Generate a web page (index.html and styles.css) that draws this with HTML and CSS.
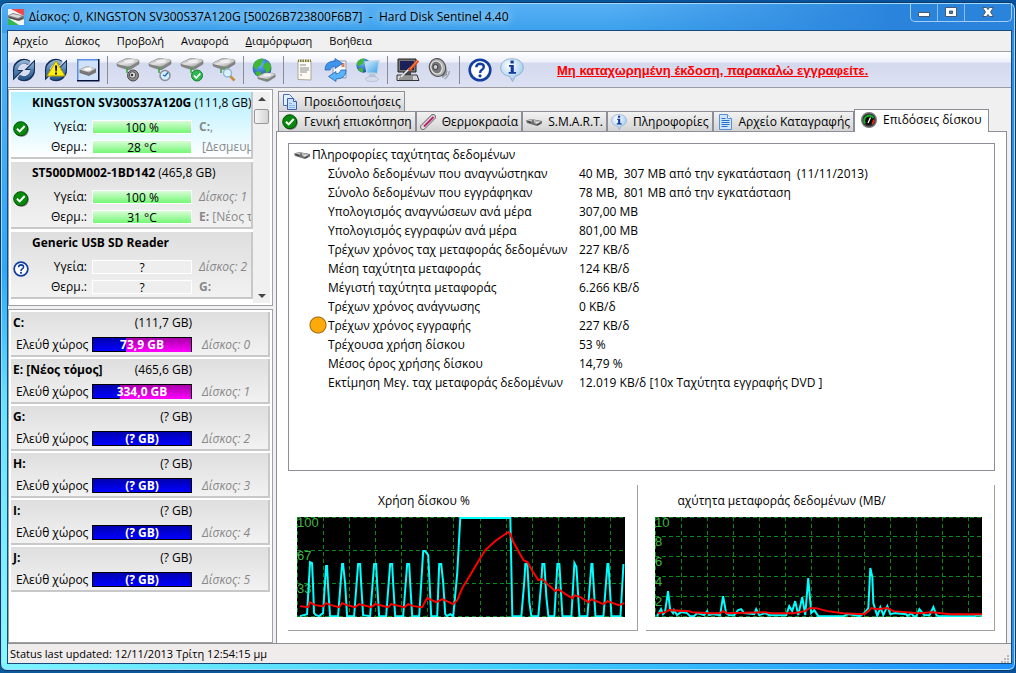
FILE: index.html
```html
<!DOCTYPE html>
<html lang="el">
<head>
    <meta charset="UTF-8">
    <meta name="viewport" content="width=device-width, initial-scale=1.0">
    <title>Hard Disk Sentinel 4.40</title>
    <link rel="stylesheet" href="styles.css">
</head>
<body>
    <!-- shared icons -->
    <svg class="defs" aria-hidden="true">
        <defs>
            <linearGradient id="metal" x1="0" y1="0" x2="1" y2="1">
                <stop offset="0" stop-color="#8a8a8a"/>
                <stop offset=".45" stop-color="#e4e4e4"/>
                <stop offset="1" stop-color="#9c9c9c"/>
            </linearGradient>
            <linearGradient id="steel" gradientUnits="userSpaceOnUse" x1="0" y1="0" x2="0" y2="24">
                <stop offset="0" stop-color="#a9c6e0"/>
                <stop offset=".5" stop-color="#5480b0"/>
                <stop offset="1" stop-color="#1d4a80"/>
            </linearGradient>
            <linearGradient id="screen" x1="0" y1="0" x2="1" y2="1">
                <stop offset="0" stop-color="#d4f2ff"/>
                <stop offset="1" stop-color="#3a9ae6"/>
            </linearGradient>
            <radialGradient id="sea" cx=".4" cy=".3" r=".8">
                <stop offset="0" stop-color="#6cb8ff"/>
                <stop offset="1" stop-color="#0b3f9c"/>
            </radialGradient>
            <radialGradient id="bubble" cx=".4" cy=".3" r=".8">
                <stop offset="0" stop-color="#ffffff"/>
                <stop offset="1" stop-color="#8fc0ea"/>
            </radialGradient>
        </defs>

        <symbol id="i-refresh" viewBox="0 0 24 24">
            <g fill="none" stroke="#12305a" stroke-width="5">
                <path d="M4 15A8.500 8.500 0 0 1 17 5"/>
                <path d="M20 9A8.500 8.500 0 0 1 7 19"/>
            </g>
            <g fill="#12305a">
                <path d="M23 1.500V12H12.500z"/>
                <path d="M1 22.500V12H11.500z"/>
            </g>
            <g fill="none" stroke="url(#steel)" stroke-width="3.400">
                <path d="M4.300 14.500A8.500 8.500 0 0 1 17.500 5.500"/>
                <path d="M19.700 9.500A8.500 8.500 0 0 1 6.500 18.500"/>
            </g>
            <g fill="url(#steel)">
                <path d="M22 4v7h-7z"/>
                <path d="M2 20v-7h7z"/>
            </g>
        </symbol>
        <symbol id="i-warn" viewBox="0 0 24 24">
            <use href="#i-refresh"/>
            <path d="M12 3 21 18H3z" fill="#ffee10" stroke="#b89c00" stroke-linejoin="round"/>
            <path d="M11 7.500h2.200l-.4 6h-1.400zM11 14.500h2v2h-2z" fill="#111"/>
        </symbol>
        <symbol id="i-disk" viewBox="0 0 24 12">
            <path d="M1 5 9 1q2-.6 4-.4l9 1.200q1.500.6 1 2V6l-8 5q-2 1-4 .4L2 8.500Q1 8 1 7z" fill="#858585" stroke="#6a6a6a" stroke-width=".5"/>
            <path d="M1 5 9 1q2-.6 4-.4l9 1.200q1.200.8.2 1.700L15 7.800q-2 1-4 .4L2 6.200Q.6 5.700 1 5z" fill="url(#metal)"/>
            <ellipse cx="13" cy="3.500" rx="5" ry="1.800" fill="#f6f6f6" opacity=".7"/>
            <path d="M11 9h2v1.500h-2z" fill="#2bb830"/>
        </symbol>
        <symbol id="i-disk-small" viewBox="0 0 16 16">
            <path d="M0 6.500 5 5l11 2v2.500L11 12 1 9z" fill="#6c6c6c"/>
            <path d="M1 6.500 5 5.300l7 1.500-4 1.500z" fill="#c4c4c4"/>
            <path d="M8 9l3-1.800 4 .4-4 2.200z" fill="#e4e4e4"/>
            <path d="M2 7.500l3 1M6 7h2M11 11l3-1.500" stroke="#333"/>
        </symbol>
        <symbol id="i-disk-box" viewBox="0 0 24 24">
            <path d="M1 1h22v22H1z" fill="#cfe2fa"/>
            <path d="M1 1h21v1.500H2.500V22H1z" fill="#5a8ee0"/>
            <path d="M22 1h1.500v22.500H1V22h21z" fill="#06143c"/>
            <path d="M3.500 11.500 11 8l9 2.500v4L13 18l-9.500-3z" fill="#777"/>
            <path d="M3.500 11.500 11 8l9 2.500-7 4z" fill="url(#metal)"/>
            <ellipse cx="12" cy="11.200" rx="3.500" ry="1.300" fill="#fff"/>
        </symbol>
        <symbol id="i-disk-sound" viewBox="0 0 24 24">
            <use href="#i-disk" width="24" height="12"/>
            <path d="M11 11v4" stroke="#3aa03a" stroke-width="1.500"/>
            <circle cx="17" cy="17.500" r="5.500" fill="#8c8c8c" stroke="#4a4a4a"/>
            <circle cx="16.500" cy="17" r="3.200" fill="#ddd" stroke="#555"/>
            <circle cx="16" cy="17" r="1.300" fill="#333"/>
        </symbol>
        <symbol id="i-disk-clock" viewBox="0 0 24 24">
            <use href="#i-disk" width="24" height="12"/>
            <path d="M11 11v4" stroke="#3aa03a" stroke-width="1.500"/>
            <circle cx="17" cy="17.500" r="5" fill="#d4ecff" stroke="#8a8f96" stroke-width="1.500"/>
            <path d="M20 14.500l-3 3.500-2-1" fill="none" stroke="#1668b8" stroke-width="1.300"/>
        </symbol>
        <symbol id="i-disk-ok" viewBox="0 0 24 24">
            <use href="#i-disk" width="24" height="12"/>
            <path d="M11 11v4" stroke="#3aa03a" stroke-width="1.500"/>
            <circle cx="17" cy="17.500" r="5.500" fill="#2fb84e" stroke="#16803a"/>
            <path d="M14 17.500l2.300 2.500 4-4.500" fill="none" stroke="#fff" stroke-width="1.800"/>
        </symbol>
        <symbol id="i-disk-find" viewBox="0 0 24 24">
            <use href="#i-disk" width="24" height="12"/>
            <path d="M9 11v4" stroke="#3aa03a" stroke-width="1.500"/>
            <path d="M18 18l4.500 4.500" stroke="#c98c38" stroke-width="2.500"/>
            <circle cx="15.500" cy="15" r="4" fill="#d8f0ff" stroke="#8fb4d0" stroke-width="1.400"/>
        </symbol>
        <symbol id="i-globe" viewBox="0 0 20 20">
            <circle cx="10" cy="10" r="9.500" fill="url(#sea)"/>
            <path d="M3 4q4-4 8-3.300 1 2-1 3l-1 3.500-3 1.800-1.500 3L1 8Q1.500 5.500 3 4zM12 6l4-2.500q3 3 3.200 6.500l-2 4-3.200 1-1-4-2-2zM6 13l3 1 1 3.500L7.500 19Q4 17.500 3 14.500z" fill="#42b830"/>
        </symbol>
        <symbol id="i-globe-disk" viewBox="0 0 24 24">
            <use href="#i-globe" width="20" height="20"/>
            <use href="#i-disk" x="5" y="14" width="19" height="10"/>
        </symbol>
        <symbol id="i-note" viewBox="0 0 24 24">
            <path d="M6 3h13v19l-13-.5z" fill="#fbfbf4" stroke="#a8a898"/>
            <path d="M6 1.500h13v2.500H6z" fill="#77764a"/>
            <path d="M7.500 1v3M10 1v3M12.500 1v3M15 1v3M17.500 1v3" stroke="#eee7b0"/>
            <path d="M8 7h6M8 10h9M8 12h9M8 14h7M8 17h2" stroke="#8a8a8a"/>
        </symbol>
        <symbol id="i-send" viewBox="0 0 24 24">
            <path d="M9 3h13v17l-13-1z" fill="#f2f6fb" stroke="#8a9ab0"/>
            <path d="M17.500 5h3v4h-3z" fill="#e08060"/>
            <path d="M1 12Q1 3 11 3V.500L18.500 5.500 11 10.500V8Q7 8 6 12z" fill="#3f95ee" stroke="#1558b0" stroke-width=".7"/>
            <path d="M22 12q0 9-10 9v2.500L4.500 18.500 12 13.500V16q4 0 5-4z" fill="#58b4fb" stroke="#1558b0" stroke-width=".7"/>
        </symbol>
        <symbol id="i-network" viewBox="0 0 24 24">
            <use href="#i-globe" width="15" height="15"/>
            <path d="M9 4l14-1.500-1.500 13L11 15z" fill="url(#screen)" stroke="#c4d6e6" stroke-width="1.300"/>
            <path d="M13 16h6l1 3H13z" fill="#b9c2d8"/>
            <ellipse cx="16" cy="21" rx="6.500" ry="2.500" fill="#d5dcec" stroke="#a8b2cc" stroke-width=".6"/>
        </symbol>
        <symbol id="i-config" viewBox="0 0 24 24">
            <path d="M2 1h18v13H2z" fill="#777" stroke="#222"/>
            <path d="M4 3h14v9H4z" fill="#1c2258"/>
            <path d="M7 14h8v3H7z" fill="#444"/>
            <path d="M1 17h20l2 5.500H1z" fill="#d4d4d4" stroke="#333"/>
            <path d="M4 19h13M3 21h14" stroke="#555"/>
            <path d="M5 19 14 10" stroke="#eee" stroke-width="1.600"/>
            <path d="M13 12.500 22 2.500" stroke="#d8481c" stroke-width="3.200"/>
            <path d="M14 11 22 2" stroke="#ff9a60" stroke-width="1"/>
        </symbol>
        <symbol id="i-speaker" viewBox="0 0 24 24">
            <path d="M14 3q5 3 5 14l-5 2z" fill="#8d8d8d"/>
            <ellipse cx="9.500" cy="9.500" rx="8" ry="9" transform="rotate(-20 9.500 9.500)" fill="#b4b4b4" stroke="#555" stroke-width="1.200"/>
            <ellipse cx="8.500" cy="9.500" rx="5.500" ry="6.500" transform="rotate(-20 8.500 9.500)" fill="#777" stroke="#eee"/>
            <circle cx="7.500" cy="9" r="2.500" fill="#ccc" stroke="#333"/>
            <path d="M14 19.500q4-2 5-7M16.500 21q4-2.500 5-8" fill="none" stroke="#9aa0aa" stroke-width="1.300"/>
        </symbol>
        <symbol id="i-question" viewBox="0 0 24 24">
            <circle cx="12" cy="12" r="10.300" fill="#fff" stroke="#123f9f" stroke-width="2.600"/>
            <path d="M8.300 9.300q.2-3.500 3.900-3.500 3.700.2 3.600 3.200-.1 1.700-2 2.900-1.700 1-1.700 3" fill="none" stroke="#123f9f" stroke-width="2.400"/>
            <circle cx="12" cy="17.800" r="1.600" fill="#123f9f"/>
        </symbol>
        <symbol id="i-info" viewBox="0 0 24 24">
            <path d="M12 .7c7 0 11.300 4 11.300 8.800 0 4.500-3.300 7.400-7.800 8.500L12.500 23.500 9.500 18.200C4 17.500.7 14 .7 9.500.7 4.700 5 .7 12 .7z" fill="url(#bubble)" stroke="#88aacb" stroke-width=".9"/>
            <path d="M10.500 2.500h3.200v3h-3.200zM9 7h4.800v7H16v1.800H8.700V14h2V8.800H9z" fill="#12399b"/>
        </symbol>
        <symbol id="i-ok" viewBox="0 0 16 16">
            <circle cx="8.600" cy="8.600" r="7.200" fill="#777"/>
            <circle cx="7.700" cy="7.700" r="7" fill="#078a0c" stroke="#034d06"/>
            <path d="M4 7.700l2.700 2.700 5-5.400" fill="none" stroke="#fff" stroke-width="2"/>
        </symbol>
        <symbol id="i-copy" viewBox="0 0 16 16">
            <path d="M1.500.5h6l3 3v8h-9z" fill="#e4f0ff" stroke="#4a6fb0"/>
            <path d="M5.500 4.500h6l3 3v8h-9z" fill="#c9e0fb" stroke="#3a5fa4"/>
            <path d="M11.500 4.500v3h3" fill="#fff" stroke="#3a5fa4"/>
            <path d="M7 9.500h3M7 11.500h6M7 13.500h6" stroke="#8db4e4"/>
        </symbol>
        <symbol id="i-thermo" viewBox="0 0 16 16">
            <path d="M3 13 13 3" stroke="#777" stroke-width="6" stroke-linecap="round"/>
            <path d="M3 13 13 3" stroke="#ddd" stroke-width="4" stroke-linecap="round"/>
            <path d="M4 12.500 13.500 3" stroke="#c0206c" stroke-width="2"/>
            <path d="M2 11 10.500 2.500" stroke="#8f8f8f"/>
        </symbol>
        <symbol id="i-page" viewBox="0 0 16 16">
            <path d="M2.500.5h8l4 4v11h-12z" fill="#cfe6ff" stroke="#5b8fd0"/>
            <path d="M10.500.5v4h4" fill="#fff" stroke="#5b8fd0"/>
            <path d="M4.500 4.500h4M4.500 6.500h8M4.500 8.500h8M4.500 10.500h8M4.500 12.500h6" stroke="#2570c8"/>
        </symbol>
        <symbol id="i-gauge" viewBox="0 0 16 16">
            <circle cx="8" cy="8" r="7.300" fill="#333" stroke="#777" stroke-width="1.400"/>
            <circle cx="8" cy="8" r="5" fill="#050505"/>
            <path d="M4 11.500A5 5 0 1 1 12.500 6" fill="none" stroke="#12b020" stroke-width="2"/>
            <path d="M12.700 7.500A5 5 0 0 1 11 12" fill="none" stroke="#e83010" stroke-width="2"/>
            <path d="M7 11 9.500 5.500" stroke="#fff" stroke-width="1.300"/>
        </symbol>
        <symbol id="i-app" viewBox="0 0 16 16">
            <path d="M0 0h16v16H0z" fill="#f4f4f4"/>
            <path d="M3 0h13v7z" fill="#ee4a4a"/>
            <path d="M0 9l11 7H0z" fill="#30b850"/>
            <path d="M0 6.500 5 4l11 3v3l-5 2-11-3z" fill="#777"/>
            <path d="M1 6.500 5 5l9 2-4 2z" fill="#ddd"/>
            <path d="M1 8.500l9 2.500 5-2" fill="none" stroke="#444"/>
        </symbol>
    </svg>

    <div class="window">
        <header class="titlebar">
            <svg class="icon-16"><use href="#i-app"/></svg>
            <h1>Δίσκος: 0, KINGSTON SV300S37A120G [50026B723800F6B7] &nbsp;-&nbsp; Hard Disk Sentinel 4.40</h1>
            <div class="window-buttons">
                <button type="button" aria-label="Ελαχιστοποίηση"><svg viewBox="0 0 14 12"><path d="M1.500 6.500h11v4h-11z" fill="#fff" stroke="#475872"/></svg></button>
                <button type="button" aria-label="Μεγιστοποίηση"><svg viewBox="0 0 14 12"><path d="M1.500 1.500h11v9h-11zM5.500 5v2.500h3V5z" fill="#fff" fill-rule="evenodd" stroke="#475872"/></svg></button>
                <button type="button" class="close" aria-label="Κλείσιμο"><svg viewBox="0 0 14 12"><path d="M1.500 1.500h4L7 3.500l1.500-2h4L9.500 6l3 4.500h-4L7 8.500l-1.500 2h-4l3-4.500z" fill="#fff" stroke="#475872"/></svg></button>
            </div>
        </header>

        <div class="client">
            <nav class="menu">
                <button type="button">Αρχείο</button>
                <button type="button">Δίσκος</button>
                <button type="button">Προβολή</button>
                <button type="button">Αναφορά</button>
                <button type="button"><u>Δ</u>ιαμόρφωση</button>
                <button type="button">Βοήθεια</button>
            </nav>

            <div class="toolbar">
                <button type="button" aria-label="Ανανέωση"><svg><use href="#i-refresh"/></svg></button>
                <button type="button" aria-label="Προειδοποίηση"><svg><use href="#i-warn"/></svg></button>
                <button type="button" aria-label="Δίσκος"><svg><use href="#i-disk-box"/></svg></button>
                <span class="separator"></span>
                <button type="button" aria-label="Ήχος δίσκου"><svg><use href="#i-disk-sound"/></svg></button>
                <button type="button" aria-label="Σύντομος έλεγχος"><svg><use href="#i-disk-clock"/></svg></button>
                <button type="button" aria-label="Πλήρης έλεγχος"><svg><use href="#i-disk-ok"/></svg></button>
                <button type="button" aria-label="Έλεγχος επιφάνειας"><svg><use href="#i-disk-find"/></svg></button>
                <span class="separator"></span>
                <button type="button" aria-label="Διαδίκτυο"><svg><use href="#i-globe-disk"/></svg></button>
                <span class="separator"></span>
                <button type="button" aria-label="Αναφορά"><svg><use href="#i-note"/></svg></button>
                <button type="button" aria-label="Αποστολή"><svg><use href="#i-send"/></svg></button>
                <button type="button" aria-label="Δίκτυο"><svg><use href="#i-network"/></svg></button>
                <span class="separator"></span>
                <button type="button" aria-label="Διαμόρφωση"><svg><use href="#i-config"/></svg></button>
                <button type="button" aria-label="Ήχος"><svg><use href="#i-speaker"/></svg></button>
                <span class="separator"></span>
                <button type="button" aria-label="Βοήθεια"><svg><use href="#i-question"/></svg></button>
                <button type="button" aria-label="Πληροφορίες"><svg><use href="#i-info"/></svg></button>
                <a class="register" href="#">Μη καταχωρημένη έκδοση, παρακαλώ εγγραφείτε.</a>
            </div>

            <div class="content">
                <aside class="sidebar">
                    <div class="disks">
                        <div class="disk-list">
                            <section class="disk selected">
                                <h2>KINGSTON SV300S37A120G <span>(111,8 GB)</span></h2>
                                <svg class="icon-16 state"><use href="#i-ok"/></svg>
                                <span class="label">Υγεία:</span><span class="bar good">100 %</span><span class="note"><b>C:</b>,</span>
                                <span class="label">Θερμ.:</span><span class="bar good">28 °C</span><span class="note">&nbsp;[Δεσμευμένο]</span>
                            </section>
                            <section class="disk">
                                <h2>ST500DM002-1BD142 <span>(465,8 GB)</span></h2>
                                <svg class="icon-16 state"><use href="#i-ok"/></svg>
                                <span class="label">Υγεία:</span><span class="bar good">100 %</span><span class="note"><i>Δίσκος: 1</i></span>
                                <span class="label">Θερμ.:</span><span class="bar good">31 °C</span><span class="note"><b>E:</b> [Νέος τόμος]</span>
                            </section>
                            <section class="disk">
                                <h2>Generic USB SD Reader</h2>
                                <svg class="icon-16 state"><use href="#i-question"/></svg>
                                <span class="label">Υγεία:</span><span class="bar">?</span><span class="note"><i>Δίσκος: 2</i></span>
                                <span class="label">Θερμ.:</span><span class="bar">?</span><span class="note"><b>G:</b></span>
                            </section>
                        </div>
                        <div class="scrollbar">
                            <span class="arrow up"></span>
                            <span class="thumb"></span>
                            <span class="arrow down"></span>
                        </div>
                    </div>

                    <div class="volumes">
                        <section class="volume">
                            <h2>C:</h2><span class="size">(111,7 GB)</span>
                            <span class="label">Ελεύθ χώρος</span><span class="space"><span class="used" style="width: 66%"></span><b>73,9 GB</b></span><i>Δίσκος: 0</i>
                        </section>
                        <section class="volume">
                            <h2>E: [Νέος τόμος]</h2><span class="size">(465,6 GB)</span>
                            <span class="label">Ελεύθ χώρος</span><span class="space"><span class="used" style="width: 72%"></span><b>334,0 GB</b></span><i>Δίσκος: 1</i>
                        </section>
                        <section class="volume">
                            <h2>G:</h2><span class="size">(? GB)</span>
                            <span class="label">Ελεύθ χώρος</span><span class="space"><b>(? GB)</b></span><i>Δίσκος: 2</i>
                        </section>
                        <section class="volume">
                            <h2>H:</h2><span class="size">(? GB)</span>
                            <span class="label">Ελεύθ χώρος</span><span class="space"><b>(? GB)</b></span><i>Δίσκος: 3</i>
                        </section>
                        <section class="volume">
                            <h2>I:</h2><span class="size">(? GB)</span>
                            <span class="label">Ελεύθ χώρος</span><span class="space"><b>(? GB)</b></span><i>Δίσκος: 4</i>
                        </section>
                        <section class="volume">
                            <h2>J:</h2><span class="size">(? GB)</span>
                            <span class="label">Ελεύθ χώρος</span><span class="space"><b>(? GB)</b></span><i>Δίσκος: 5</i>
                        </section>
                    </div>
                </aside>

                <main class="main">
                    <div class="tabs">
                        <button type="button" class="tab"><svg class="icon-16"><use href="#i-copy"/></svg>Προειδοποιήσεις</button>
                    </div>
                    <div class="tabs">
                        <button type="button" class="tab"><svg class="icon-16"><use href="#i-ok"/></svg>Γενική επισκόπηση</button>
                        <button type="button" class="tab"><svg class="icon-16"><use href="#i-thermo"/></svg>Θερμοκρασία</button>
                        <button type="button" class="tab"><svg class="icon-16"><use href="#i-disk-small"/></svg>S.M.A.R.T.</button>
                        <button type="button" class="tab"><svg class="icon-16"><use href="#i-info"/></svg>Πληροφορίες</button>
                        <button type="button" class="tab"><svg class="icon-16"><use href="#i-page"/></svg>Αρχείο Καταγραφής</button>
                        <button type="button" class="tab active"><svg class="icon-16"><use href="#i-gauge"/></svg>Επιδόσεις δίσκου</button>
                    </div>

                    <div class="page">
                        <div class="info">
                            <h2><svg class="icon-16"><use href="#i-disk-small"/></svg>Πληροφορίες ταχύτητας δεδομένων</h2>
                            <table>
                                <tr><th>Σύνολο δεδομένων που αναγνώστηκαν</th><td>40 MB,&nbsp; 307 MB από την εγκατάσταση&nbsp; (11/11/2013)</td></tr>
                                <tr><th>Σύνολο δεδομένων που εγγράφηκαν</th><td>78 MB,&nbsp; 801 MB από την εγκατάσταση</td></tr>
                                <tr><th>Υπολογισμός αναγνώσεων ανά μέρα</th><td>307,00 MB</td></tr>
                                <tr><th>Υπολογισμός εγγραφών ανά μέρα</th><td>801,00 MB</td></tr>
                                <tr><th>Τρέχων χρόνος ταχ μεταφοράς δεδομένων</th><td>227 KB/δ</td></tr>
                                <tr><th>Μέση ταχύτητα μεταφοράς</th><td>124 KB/δ</td></tr>
                                <tr><th>Μέγιστή ταχύτητα μεταφοράς</th><td>6.266 KB/δ</td></tr>
                                <tr><th>Τρέχων χρόνος ανάγνωσης</th><td>0 KB/δ</td></tr>
                                <tr class="busy"><th>Τρέχων χρόνος εγγραφής</th><td>227 KB/δ</td></tr>
                                <tr><th>Τρέχουσα χρήση δίσκου</th><td>53 %</td></tr>
                                <tr><th>Μέσος όρος χρήσης δίσκου</th><td>14,79 %</td></tr>
                                <tr><th>Εκτίμηση Μεγ. ταχ μεταφοράς δεδομένων</th><td>12.019 KB/δ [10x Ταχύτητα εγγραφής DVD ]</td></tr>
                            </table>
                        </div>

                        <div class="charts">
                            <figure class="chart">
                                <figcaption>Χρήση δίσκου %</figcaption>
                                <svg viewBox="0 0 327 100">
                                    <path class="grid" d="M.5 0v100M26.500 0v100M52.500 0v100M78.500 0v100M104.500 0v100M130.500 0v100M156.500 0v100M183.500 0v100M209.500 0v100M235.500 0v100M261.500 0v100M287.500 0v100M313.500 0v100M0 .5h327M0 33.500h327M0 66.500h327M0 99.500h327"/>
                                    <text x="0" y="10">100</text>
                                    <text x="0" y="43">67</text>
                                    <text x="0" y="76">33</text>
                                    <polyline class="now" points="3,99 10,97 13,45 15,46 16,68 17,96 19,98 22,99 26,96 29,49 30,49 31,70 33,99 41,99 45,47 46,47 48,66 50,99 57,99 61,47 63,47 64,66 66,98 73,99 77,47 79,47 80,66 82,99 89,99 93,47 95,47 96,66 98,99 106,99 110,47 112,47 113,66 115,99 122,99 126,34 128,34 131,38 134,99 140,99 142,47 144,47 146,66 148,97 150,99 153,97 156,99 160,56 163,1 213,1 215,99 224,99 227,64 228,47 230,47 232,85 234,99 241,99 244,64 245,47 247,47 249,80 251,99 257,99 260,47 262,47 265,99 274,99 277,46 279,50 282,99 290,99 294,47 295,47 298,99 306,99 310,47 311,47 314,99 323,99 326,47"/>
                                    <polyline class="average" points="3,89 11,90 13,85 18,88 26,89 29,86 34,88 42,90 45,86 50,88 58,90 62,87 74,90 78,87 91,90 94,87 107,90 111,87 116,89 125,90 127,86 130,81 139,85 145,82 156,87 160,83 165,71 173,58 180,46 188,33 198,24 205,19 211,15 213,17 216,25 221,34 226,43 230,45 235,54 241,63 245,62 251,68 258,74 261,72 268,77 275,81 277,78 283,80 291,85 294,82 306,87 310,84 321,88 327,86"/>
                                </svg>
                            </figure>
                            <figure class="chart">
                                <figcaption>αχύτητα μεταφοράς δεδομένων (MB/</figcaption>
                                <svg viewBox="0 0 327 100">
                                    <path class="grid" d="M.5 0v100M26.500 0v100M52.500 0v100M78.500 0v100M104.500 0v100M130.500 0v100M156.500 0v100M183.500 0v100M209.500 0v100M235.500 0v100M261.500 0v100M287.500 0v100M313.500 0v100M0 .5h327M0 19.500h327M0 39.500h327M0 59.500h327M0 79.500h327M0 99.500h327"/>
                                    <text x="0" y="10">10</text>
                                    <text x="0" y="29">8</text>
                                    <text x="0" y="49">6</text>
                                    <text x="0" y="69">4</text>
                                    <text x="0" y="89">2</text>
                                    <polyline class="now" points="2,99 6,92 8,97 10,95 13,74 15,92 18,96 19,93 22,98 26,95 32,96 35,99 39,99 42,96 49,98 52,94 54,98 58,97 65,98 68,79 71,96 74,98 79,98 83,93 86,92 89,96 99,97 101,92 104,98 110,96 114,98 131,98 134,89 137,94 140,84 143,98 147,80 150,98 153,61 156,96 159,93 163,99 188,99 193,97 204,99 209,96 213,91 215,51 217,60 218,86 222,99 225,90 228,98 232,89 235,97 240,96 251,97 252,99 256,96 258,99 261,99 264,92 269,98 274,98 278,90 281,98 283,99 319,99 323,98 327,99"/>
                                    <polyline class="average" points="3,96 10,95 14,93 34,94 37,95 55,96 65,96 68,94 72,96 110,95 116,96 138,96 150,94 154,91 161,91 172,94 188,96 209,97 214,93 216,91 222,92 232,91 238,94 262,96 277,95 295,97 327,97"/>
                                </svg>
                            </figure>
                        </div>
                    </div>
                </main>
            </div>

            <footer class="status">
                <span>Status last updated: 12/11/2013 Τρίτη 12:54:15 μμ</span>
                <svg class="grip" viewBox="0 0 9 9"><path d="M7 1h2v2H7zM4 4h2v2H4zM7 4h2v2H7zM1 7h2v2H1zM4 7h2v2H4zM7 7h2v2H7z" fill="#b8b8b8"/></svg>
            </footer>
        </div>
    </div>
</body>
</html>
```

FILE: styles.css
```css
* {
    box-sizing: border-box;
}

body {
    margin: 0;
    padding: 2px 0;
    min-height: 100vh;
    display: flex;
    background: linear-gradient(90deg, #0b5a9c, #07519c);
    font-family: "Open Sans", "Noto Sans", sans-serif;
    font-size: 12px;
    line-height: 16px;
    color: #000;
}

h1, h2, figure {
    margin: 0;
    font-size: 12px;
}

button {
    margin: 0;
    padding: 0;
    border: none;
    background: none;
    font: inherit;
    color: inherit;
}

.defs {
    position: absolute;
    width: 0;
    height: 0;
}

.icon-16 {
    flex: none;
    width: 16px;
    height: 16px;
}

/* window frame */
.window {
    flex: 1;
    min-width: 0;
    display: flex;
    flex-direction: column;
    padding: 0 3px 6px 6px;
    border: 1px solid #12386a;
    border-radius: 7px;
    background:
        linear-gradient(90deg, rgba(255, 255, 255, 0) 60%, #2a84dc 88%) 0 0 / 100% 30px no-repeat,
        linear-gradient(180deg, #58b0f4 0, #3aa0ec 30px, rgba(58, 160, 236, 0) 30px),
        linear-gradient(90deg, #80f4ff, #40d0fc 50%, #1e90ff) 0 100% / 100% 7px no-repeat,
        linear-gradient(90deg, transparent 50%, #2a8ce6 50%),
        linear-gradient(180deg, #58b0f4, #30a8f8 40%, #66e4fc 60%, #88fafa);
    box-shadow: inset 0 0 0 1px #9cdcff;
}

.titlebar {
    display: flex;
    align-items: center;
    height: 27px;
    padding-left: 1px;
}

.titlebar h1 {
    flex: 1;
    padding-left: 5px;
    font-weight: normal;
    white-space: nowrap;
    text-shadow: 0 0 8px #b8e2ff, 0 0 8px #b8e2ff;
}

.window-buttons {
    display: flex;
    align-self: flex-start;
    height: 19px;
    border: 1px solid #a4cdf2;
    border-top: none;
    border-radius: 0 0 5px 5px;
}

.window-buttons button {
    display: flex;
    align-items: center;
    justify-content: center;
    width: 27px;
    border-right: 1px solid #8dbce8;
}

.window-buttons .close {
    width: 46px;
    border-right: none;
}

.window-buttons svg {
    width: 14px;
    height: 12px;
}

.client {
    flex: 1;
    display: flex;
    flex-direction: column;
    border: 1px solid #174a7c;
    background: #f0f0f0;
}

/* menu and toolbar */
.menu {
    display: flex;
    gap: 17px;
    height: 21px;
    padding-left: 5px;
    font-size: 11px;
    border-bottom: 1px solid #a0a0a0;
}

.toolbar {
    display: flex;
    align-items: center;
    gap: 8px;
    height: 36px;
    padding: 0 4px;
    border-bottom: 1px solid #9a9ca4;
    background: linear-gradient(#fff, #eef0fa 10px, #d3d9ee 11px, #dde1f3);
}

.toolbar button,
.toolbar button svg {
    display: block;
    width: 24px;
    height: 24px;
}

.separator {
    width: 1px;
    height: 28px;
    margin-left: -1px;
    background: #8c8c94;
}

.toolbar .register {
    margin-left: 25px;
    padding-top: 2px;
    font: bold 13px/16px "Liberation Sans", Arial, sans-serif;
    color: #f00;
    white-space: nowrap;
}

.content {
    flex: 1;
    display: flex;
    gap: 3px;
    padding-top: 1px;
}

/* disks and volumes */
.sidebar {
    flex: none;
    width: 265px;
    display: flex;
    flex-direction: column;
    gap: 3px;
}

.disks {
    display: flex;
    height: 217px;
    padding: 2px;
    border: 1px solid #a0a0a8;
    background: #fff;
}

.disk-list {
    flex: 1;
    min-width: 0;
}

.disk,
.volume {
    display: grid;
    align-items: center;
    overflow: hidden;
    white-space: nowrap;
    border: solid #c8c8c8;
    border-width: 0 2px 2px 0;
    background: linear-gradient(#dedede, #f2f2f2);
}

.disk {
    grid-template-columns: 18px 63px 100px 1fr;
    grid-template-rows: 25px 20px 20px;
    height: 67px;
    margin-bottom: 3px;
}

.disk.selected {
    background: linear-gradient(#b4f0ff, #fff);
}

.disk h2 {
    grid-column: 1 / -1;
    align-self: start;
    padding: 3px 0 0 21px;
}

.disk h2 span {
    font-weight: normal;
}

.disk .state {
    grid-row: 2 / 4;
    align-self: start;
    margin: 4px 0 0 2px;
}

.disk .label {
    grid-column: 2;
    text-align: right;
    padding-right: 5px;
}

.bar {
    height: 14px;
    line-height: 14px;
    text-align: center;
    border: 1px solid #fff;
    background: #eee;
}

.bar.good {
    background: linear-gradient(#d8fcd8, #74f874);
}

.note {
    padding-left: 7px;
    overflow: hidden;
    color: #888;
}

.scrollbar {
    display: flex;
    flex-direction: column;
    align-items: center;
    width: 17px;
    padding: 5px 1px;
    background: #f0f0f0;
}

.arrow {
    border: solid transparent;
    border-width: 0 4px;
}

.arrow.up {
    border-bottom: 4px solid #444;
}

.arrow.down {
    margin-top: auto;
    border-top: 4px solid #444;
}

.thumb {
    width: 15px;
    height: 15px;
    margin-top: 8px;
    border: 1px solid #989898;
    border-radius: 2px;
    background: linear-gradient(90deg, #f6f6f6, #d4d4d4);
}

.volumes {
    flex: 1;
    padding: 2px;
    border: 1px solid #a0a0a8;
    background: #fff;
}

.volume {
    grid-template-columns: 81px 100px 1fr;
    grid-template-rows: 21px 23px;
    height: 45px;
    margin-bottom: 2px;
}

.volume h2 {
    padding-left: 2px;
}

.volume .size {
    text-align: right;
}

.volume .label {
    grid-column: 1;
    padding-left: 5px;
}

.volume i {
    padding-left: 10px;
    color: #888;
}

.space {
    display: grid;
    height: 15px;
    border: 1px solid #000;
    background: linear-gradient(#0000b0, #00f);
}

.space > * {
    grid-area: 1 / 1;
}

.space .used {
    justify-self: end;
    background: linear-gradient(#a800a8, #f0f);
}

.space b {
    line-height: 14px;
    text-align: center;
    color: #fff;
}

/* tabs */
.main {
    flex: 1;
    min-width: 0;
    display: flex;
    flex-direction: column;
    padding: 2px 4px 0 0;
}

.tabs {
    display: flex;
    align-items: flex-end;
    height: 20px;
    padding-left: 2px;
}

.tab {
    display: flex;
    align-items: center;
    gap: 6px;
    height: 20px;
    padding: 0 3px;
    border: 1px solid #8c8e98;
    border-bottom: none;
    background: linear-gradient(#f2f2f2, #d4d4d4);
    white-space: nowrap;
}

.tab.active {
    z-index: 1;
    height: 23px;
    margin-bottom: -1px;
    padding: 0 6px 2px;
    background: #fff;
}

.page {
    flex: 1;
    display: flex;
    flex-direction: column;
    gap: 14px;
    padding: 11px 11px 12px;
    border: 1px solid #8c8e98;
    border-bottom: none;
    background: #fff;
}

.info {
    flex: 1;
    padding: 1px 5px;
    border: 1px solid #8c8e98;
}

.info h2 {
    display: flex;
    align-items: center;
    gap: 2px;
    height: 19px;
    font-weight: normal;
}

.info table {
    border-collapse: collapse;
    margin-left: 15px;
}

.info th,
.info td {
    height: 19px;
    padding: 0;
    font-weight: normal;
    text-align: left;
    white-space: nowrap;
}

.info th {
    width: 270px;
    padding-left: 19px;
}

.busy th {
    background: radial-gradient(circle 9px at 9px 9px, #ffaa0a 7px, #9a6a10 8px, transparent 9px);
}

/* charts */
.charts {
    display: grid;
    grid-template-columns: 1fr 1fr;
    gap: 8px;
}

.chart {
    min-width: 0;
    padding: 8px 12px 13px 9px;
    border: solid #a0a0a0;
    border-width: 0 1px 1px 0;
}

.chart figcaption {
    width: 208px;
    margin: 0 0 8px 23px;
    text-align: center;
    white-space: nowrap;
}

.chart svg {
    display: block;
    width: 100%;
    background: #000;
}

.chart text {
    font: 13px "Liberation Sans", Arial, sans-serif;
    fill: #40b840;
}

.grid {
    fill: none;
    stroke: #0a8a1a;
    stroke-dasharray: 4 3;
    shape-rendering: crispEdges;
}

.now,
.average {
    fill: none;
    stroke: #0ff;
    stroke-width: 2;
}

.average {
    stroke: #f00;
}

/* status bar */
.status {
    display: flex;
    justify-content: space-between;
    align-items: center;
    height: 20px;
    padding: 0 2px;
    border-top: 1px solid #909090;
    background: #f0eceb;
    font-size: 11px;
}

.grip {
    align-self: flex-end;
    width: 9px;
    height: 9px;
}
```
